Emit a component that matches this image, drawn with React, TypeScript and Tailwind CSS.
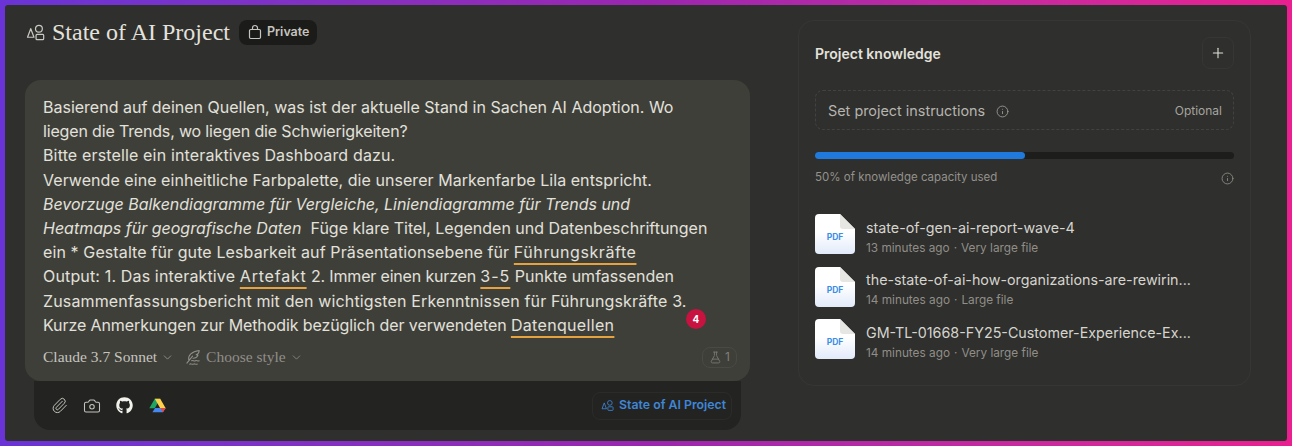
import React from 'react';
import { ChevronDown, Camera, FlaskConical, Info, Paperclip, Plus } from 'lucide-react';
import { FaGithub } from 'react-icons/fa';

const sans = 'font-["Inter",sans-serif]';
const serif = 'font-["Liberation_Serif",serif]';

const ProjectIcon = ({ className }: { className: string }) => (
  <svg viewBox="0 0 20 20" fill="none" stroke="currentColor" strokeWidth="1.3" className={className}>
    <path d="M5 6 8.400 15H1.600L5 6Z" strokeLinejoin="round" />
    <circle cx="13.600" cy="6" r="3.600" />
    <rect x="10.600" y="12" width="8" height="5.500" rx="1" />
  </svg>
);

const BagIcon = () => (
  <svg viewBox="0 0 16 16" fill="none" stroke="currentColor" strokeWidth="1.2" className="h-4 w-4">
    <rect x="2.500" y="5.500" width="11" height="9" rx="1.200" />
    <path d="M5.500 5.500V4a2.500 2.500 0 0 1 5 0v1.500" />
  </svg>
);

const StyleIcon = () => (
  <svg viewBox="0 0 18 18" fill="none" stroke="currentColor" strokeWidth="1.1" className="h-[17px] w-[17px]">
    <path d="M2 15 8 7.500M4 11.500C3 7 7 2.500 15 1.500c0 3-1.500 4-3.200 4.500 1 .3 1.500.4 2 .4-1 2.500-3.500 3.400-5.300 3.400" strokeLinecap="round" strokeLinejoin="round" />
    <path d="M7 12.500c1.500-1 2.500 1 4 0s2.500 1 4 0M5 16c1.500-1 2.500 1 4 0s2.500 1 4 0" strokeLinecap="round" />
  </svg>
);

const DriveIcon = () => (
  <svg viewBox="0 0 24 22" className="h-[15px] w-[17px]">
    <path d="M8 1h8l-8 14H0L8 1Z" fill="#1fa463" />
    <path d="M8 1h8l8 14h-8L8 1Z" fill="#ffd04b" />
    <path d="M4.500 21 8.500 14.500H24L20 21H4.500Z" fill="#4688f1" />
    <path d="M20 21l-4-6.500h8L20 21Z" fill="#e5483a" />
  </svg>
);

const PdfIcon = () => (
  <div className="relative h-10 w-10 shrink-0">
    <svg viewBox="0 0 40 40" className="h-10 w-10">
      <defs>
        <linearGradient id="pdfFill" x1="0" y1="0" x2="0" y2="1">
          <stop offset="0.45" stopColor="#ffffff" />
          <stop offset="1" stopColor="#e2ebfa" />
        </linearGradient>
      </defs>
      <path d="M4 0H25L40 15V36a4 4 0 0 1-4 4H4a4 4 0 0 1-4-4V4a4 4 0 0 1 4-4Z" fill="url(#pdfFill)" />
      <path d="M25 0 40 15H28a3 3 0 0 1-3-3V0Z" fill="#e6e6e2" />
    </svg>
    <span className={`absolute inset-x-0 top-[18px] text-center text-[8.500px] leading-[11px] font-bold text-[#3b8ee8] ${sans}`}>PDF</span>
  </div>
);

const files = [
  { name: 'state-of-gen-ai-report-wave-4', age: '13 minutes ago', size: 'Very large file' },
  { name: 'the-state-of-ai-how-organizations-are-rewirin...', age: '14 minutes ago', size: 'Large file' },
  { name: 'GM-TL-01668-FY25-Customer-Experience-Ex...', age: '14 minutes ago', size: 'Very large file' },
];

const Mark = ({ children, className }: { children: React.ReactNode; className: string }) => (
  <span className={`underline decoration-[#e5a23e] decoration-2 underline-offset-[5px] ${className}`}>{children}</span>
);

export default function App() {
  return (
    <div className={`h-[446px] w-[1292px] overflow-hidden bg-gradient-to-r from-[#6a33d6] via-[#9b25b0] to-[#ea1f90] p-[5px] ${sans}`}>
      <div className="flex h-[436px] rounded-[3px] bg-[#2f2f2d]">
        {/* Left column */}
        <div className="w-[745px] shrink-0 pl-5 pt-[11px]">
          <div className="flex h-8 items-center pl-px">
            <ProjectIcon className="h-[19px] w-[19px] text-[#c9c8c2]" />
            <h1 className={`ml-[7px] text-2xl leading-8 text-[#e3e2dc] ${serif}`}>State of AI Project</h1>
            <div className="ml-[9px] flex h-[25px] items-center gap-1 rounded-lg bg-[#1b1b1a] px-2 text-[12.500px] font-semibold text-[#c5c4be]">
              <BagIcon />
              Private
            </div>
          </div>

          <div className="relative z-10 mt-8 h-[301px] w-[725px] rounded-2xl bg-[#3f3f3a] pl-[18px] pt-[15px]">
            <div className="w-[690px] whitespace-nowrap text-base leading-[24.200px] text-[#e2e1da]">
              <p>Basierend auf deinen Quellen, was ist der aktuelle Stand in Sachen AI Adoption. Wo</p>
              <p className="tracking-[-0.16px]">liegen die Trends, wo liegen die Schwierigkeiten?</p>
              <p className="tracking-[0.15px]">Bitte erstelle ein interaktives Dashboard dazu.</p>
              <p className="tracking-[0.05px]">Verwende eine einheitliche Farbpalette, die unserer Markenfarbe Lila entspricht.</p>
              <p className="tracking-[-0.03px]"><em>Bevorzuge Balkendiagramme für Vergleiche, Liniendiagramme für Trends und</em></p>
              <p><em>Heatmaps für geografische Daten</em>&nbsp; Füge klare Titel, Legenden und Datenbeschriftungen</p>
              <p className="tracking-[0.11px]">
                ein * Gestalte für gute Lesbarkeit auf Präsentationsebene für <Mark className="tracking-[0.57px]">Führungskräfte</Mark>
              </p>
              <p>
                <span className="tracking-[0.15px]">Output: 1. Das interaktive </span>
                <Mark className="tracking-[0.8px]">Artefakt</Mark>
                <span className="tracking-[-0.17px]"> 2. Immer einen kurzen </span>
                <Mark className="tracking-[1px]">3-5</Mark> Punkte umfassenden
              </p>
              <p className="tracking-[0.14px]">Zusammenfassungsbericht mit den wichtigsten Erkenntnissen für Führungskräfte 3.</p>
              <p className="tracking-[-0.1px]">
                Kurze Anmerkungen zur Methodik bezüglich der verwendeten <Mark className="tracking-[0.33px]">Datenquellen</Mark>
              </p>
            </div>

            <span className="absolute left-[661px] top-[229px] flex h-5 w-5 items-center justify-center rounded-full bg-[#c8123f] text-[10px] font-bold text-white">4</span>

            <div className="mt-2 flex h-6 items-center pr-[13px]">
              <span className={`text-[15.500px] text-[#c5c4be] ${serif}`}>Claude 3.7 Sonnet</span>
              <ChevronDown className="ml-1 h-[13px] w-[13px] text-[#9b9a94]" strokeWidth={1.5} />
              <span className="ml-[11px] text-[#8f8e88]"><StyleIcon /></span>
              <span className={`ml-1 text-[15.500px] text-[#8f8e88] ${serif}`}>Choose style</span>
              <ChevronDown className="ml-1 h-[13px] w-[13px] text-[#8f8e88]" strokeWidth={1.5} />
              <div className="ml-auto flex h-[21px] items-center gap-[3px] rounded-lg border border-[#4a4a45] px-[6px] text-xs text-[#7f7e78]">
                <FlaskConical className="h-[13px] w-[13px]" strokeWidth={1.5} />
                1
              </div>
            </div>
          </div>

          <div className="ml-[9px] flex h-[49px] w-[707px] items-center rounded-b-2xl bg-[#232321] pl-[17px] pr-[9px]">
            <Paperclip className="h-[17px] w-[17px] text-[#c5c4be]" strokeWidth={1.4} />
            <Camera className="ml-[15px] h-[18px] w-[18px] text-[#c5c4be]" strokeWidth={1.4} />
            <FaGithub className="ml-[15px] h-[17px] w-[17px] text-[#f2f1ec]" />
            <span className="ml-4"><DriveIcon /></span>
            <div className="ml-auto flex h-7 items-center gap-[5px] rounded-lg border border-[#2b2b29] pl-2 pr-[5px] text-[12.300px] font-semibold text-[#3f86d6]">
              <ProjectIcon className="h-[13px] w-[13px]" />
              State of AI Project
            </div>
          </div>
        </div>

        {/* Right column */}
        <div className="pl-[48px] pt-[15px]">
          <div className="h-[366px] w-[453px] rounded-2xl border border-[#363634] px-4 pt-4">
            <div className="flex h-8 items-center justify-between">
              <h2 className="pt-px text-sm font-semibold text-[#e3e2dc]">Project knowledge</h2>
              <div className="flex h-8 w-8 items-center justify-center rounded-lg border border-[#363634]">
                <Plus className="h-4 w-4 text-[#e3e2dc]" strokeWidth={1.6} />
              </div>
            </div>

            <div className="mt-[21px] flex h-10 items-center rounded-lg border border-dashed border-[#42423f] pl-3 pr-[11px] pt-[2px]">
              <span className="text-[14.400px] text-[#b5b4ae]">Set project instructions</span>
              <Info className="ml-[11px] h-[13px] w-[13px] text-[#a5a49e]" strokeWidth={1.5} />
              <span className="ml-auto text-xs text-[#a5a49e]">Optional</span>
            </div>

            <div className="mt-[22px] h-[7px] rounded-full bg-[#1d1d1b]">
              <div className="h-[7px] w-[50%] rounded-full bg-[#2079dd]" />
            </div>

            <div className="mt-[11px] flex h-4 items-center justify-between">
              <span className="text-[11.500px] text-[#93928c]">50% of knowledge capacity used</span>
              <Info className="h-[13px] w-[13px] text-[#93928c]" strokeWidth={1.5} />
            </div>

            <div className="mt-[28px] flex flex-col gap-[12.500px]">
              {files.map((f) => (
                <div key={f.name} className="flex h-10 items-center gap-[11px]">
                  <PdfIcon />
                  <div className="mt-2 min-w-0">
                    <div className="text-[14.300px] leading-5 text-[#d5d4ce]">{f.name}</div>
                    <div className="flex items-center gap-1 text-[11.800px] leading-[21px] text-[#8f8e88]">
                      <span>{f.age}</span>
                      <span>·</span>
                      <span>{f.size}</span>
                    </div>
                  </div>
                </div>
              ))}
            </div>
          </div>
        </div>
      </div>
    </div>
  );
}
